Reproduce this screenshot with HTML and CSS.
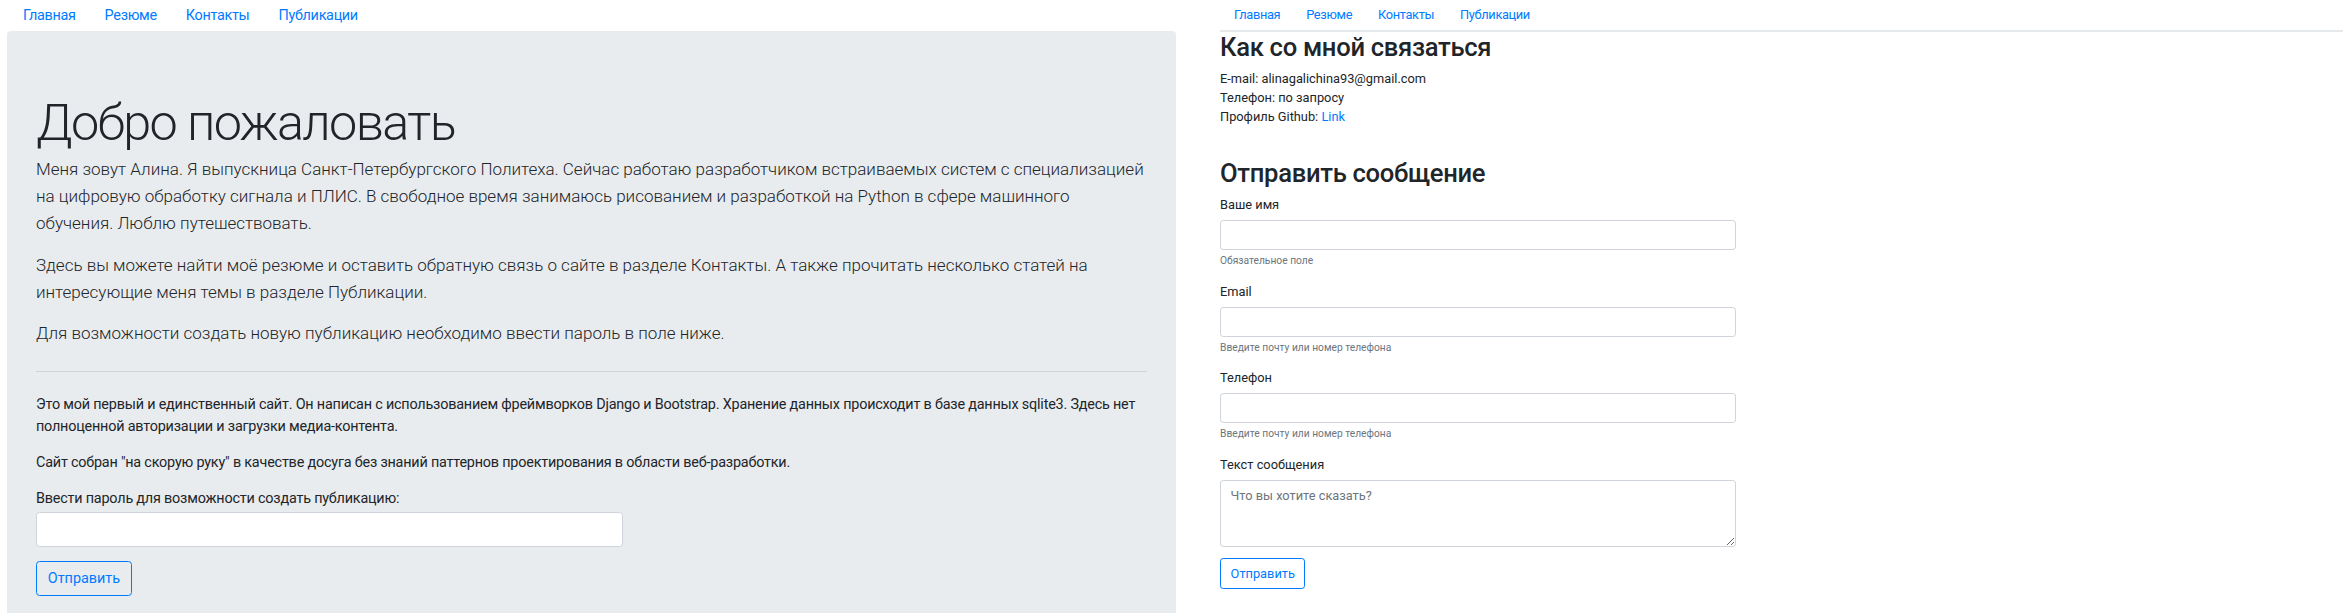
FILE: index.html
```html
<!DOCTYPE html>
<html lang="ru">
<head>
<meta charset="utf-8">
<title>Алина — главная и контакты</title>
<link rel="stylesheet" href="styles.css">
</head>
<body>
<div class="screens">
  <section class="shot shot-home">
    <nav class="nav nav-home">
      <a class="nav-link" href="#">Главная</a>
      <a class="nav-link" href="#">Резюме</a>
      <a class="nav-link" href="#">Контакты</a>
      <a class="nav-link" href="#">Публикации</a>
    </nav>
    <div class="jumbotron">
      <h1 class="display">Добро пожаловать</h1>
      <p class="lead">Меня зовут Алина. Я выпускница Санкт-Петербургского Политеха. Сейчас работаю разработчиком встраиваемых систем с специализацией на цифровую обработку сигнала и ПЛИС. В свободное время занимаюсь рисованием и разработкой на Python в сфере машинного обучения. Люблю путешествовать.</p>
      <p class="lead">Здесь вы можете найти моё резюме и оставить обратную связь о сайте в разделе Контакты. А также прочитать несколько статей на интересующие меня темы в разделе Публикации.</p>
      <p class="lead">Для возможности создать новую публикацию необходимо ввести пароль в поле ниже.</p>
      <hr class="divider">
      <p class="text">Это мой первый и единственный сайт. Он написан с использованием фреймворков Django и Bootstrap. Хранение данных происходит в базе данных sqlite3. Здесь нет полноценной авторизации и загрузки медиа-контента.</p>
      <p class="text">Сайт собран "на скорую руку" в качестве досуга без знаний паттернов проектирования в области веб-разработки.</p>
      <form class="pw-form">
        <div class="form-group">
          <label class="label">Ввести пароль для возможности создать публикацию:</label>
          <input class="input input-pw" type="password">
        </div>
        <button class="btn" type="button">Отправить</button>
      </form>
    </div>
  </section>

  <section class="shot shot-contacts">
    <nav class="nav nav-contacts">
      <a class="nav-link" href="#">Главная</a>
      <a class="nav-link" href="#">Резюме</a>
      <a class="nav-link" href="#">Контакты</a>
      <a class="nav-link" href="#">Публикации</a>
    </nav>
    <h2 class="heading">Как со мной связаться</h2>
    <div class="contacts">
      <div class="line">E-mail: alinagalichina93@gmail.com</div>
      <div class="line">Телефон: по запросу</div>
      <div class="line">Профиль Github: <a class="link" href="#">Link</a></div>
    </div>
    <h2 class="heading">Отправить сообщение</h2>
    <form class="msg-form">
      <div class="group">
        <label class="field-label">Ваше имя</label>
        <input class="field" type="text">
        <small class="help">Обязательное поле</small>
      </div>
      <div class="group">
        <label class="field-label">Email</label>
        <input class="field" type="text">
        <small class="help">Введите почту или номер телефона</small>
      </div>
      <div class="group">
        <label class="field-label">Телефон</label>
        <input class="field" type="text">
        <small class="help">Введите почту или номер телефона</small>
      </div>
      <div class="group">
        <label class="field-label">Текст сообщения</label>
        <textarea class="field area" placeholder="Что вы хотите сказать?"></textarea>
      </div>
      <button class="btn btn-sm" type="button">Отправить</button>
    </form>
  </section>
</div>
</body>
</html>
```

FILE: styles.css
```css
* { box-sizing: border-box; }
html, body { margin: 0; padding: 0; }
body {
  width: 2343px;
  height: 613px;
  overflow: hidden;
  background: #fff;
  color: #212529;
  font-family: Roboto, "Noto Sans", sans-serif;
}
.screens {
  display: flex;
  align-items: flex-start;
  height: 613px;
}
.shot { height: 613px; overflow: hidden; }

/* ---------- left: home ---------- */
.shot-home {
  width: 1177px;
  flex: none;
  font-size: 14.4px;
  line-height: 1.5;
  letter-spacing: -0.2px;
}
.nav {
  display: flex;
  align-items: center;
}
.nav-link {
  color: #007bff;
  text-decoration: none;
}
.nav-home {
  height: 31px;
  padding-left: 23px;
  gap: 29px;
  font-size: 14.4px;
  letter-spacing: -0.3px;
}
.jumbotron {
  margin-left: 7px;
  width: 1169px;
  background: #e9ecef;
  border-radius: 4px 4px 0 0;
  padding: 62px 29px 60px 29px;
}
.display {
  margin: 0 0 3px;
  font-size: 50.4px;
  font-weight: 300;
  line-height: 1.2;
  letter-spacing: -1.6px;
  color: #212529;
}
.lead {
  margin: 0 0 14.4px;
  font-size: 17px;
  font-weight: 300;
  line-height: 27px;
  letter-spacing: 0;
}
.divider {
  margin: 24px 0 22px;
  border: 0;
  border-top: 1px solid rgba(0,0,0,.1);
}
.text { margin: 0 0 14.4px; }
.form-group { margin-bottom: 14.4px; }
.label {
  display: inline-block;
  margin-bottom: 3px;
}
.input {
  display: block;
  height: 34.4px;
  border: 1px solid #ced4da;
  border-radius: 3.6px;
  background: #fff;
  font: inherit;
}
.input-pw { width: 587px; }
.btn {
  display: inline-block;
  font-family: inherit;
  font-size: 14.4px;
  line-height: 1.5;
  padding: 5.4px 10.8px;
  color: #007bff;
  background: transparent;
  border: 1px solid #007bff;
  border-radius: 3.6px;
}

/* ---------- right: contacts ---------- */
.shot-contacts {
  flex: 1;
  padding-left: 43px;
  font-size: 12.8px;
  line-height: 1.5;
}
.nav-contacts {
  height: 32px;
  border-bottom: 2px solid #e6e9ec;
  padding-left: 14px;
  gap: 26px;
  font-size: 12.8px;
  letter-spacing: -0.35px;
}
.heading {
  margin: 0 0 6.4px;
  font-size: 25.6px;
  font-weight: 500;
  line-height: 1.2;
  letter-spacing: -0.3px;
}
.contacts { margin-bottom: 32px; }
.line { line-height: 19px; }
.link { color: #007bff; text-decoration: none; }
.msg-form { width: 516px; margin-top: 0; }
.group { margin-bottom: 13px; }
.field-label {
  display: block;
  margin-bottom: 6px;
  margin-top: 5px;
}
.field {
  display: block;
  width: 516px;
  height: 30px;
  padding: 4.8px 9.6px;
  border: 1px solid #ced4da;
  border-radius: 3.2px;
  background: #fff;
  font-family: inherit;
  font-size: 12.8px;
  line-height: 1.5;
  color: #495057;
}
.area {
  height: 67px;
  resize: vertical;
}
.area::placeholder { color: #6c757d; }
.help {
  display: block;
  margin-top: 3px;
  font-size: 10.24px;
  color: #6c757d;
}
.btn-sm {
  font-size: 12.8px;
  padding: 4.8px 9.6px;
  border-radius: 3.2px;
  margin-top: -2px;
}
```
